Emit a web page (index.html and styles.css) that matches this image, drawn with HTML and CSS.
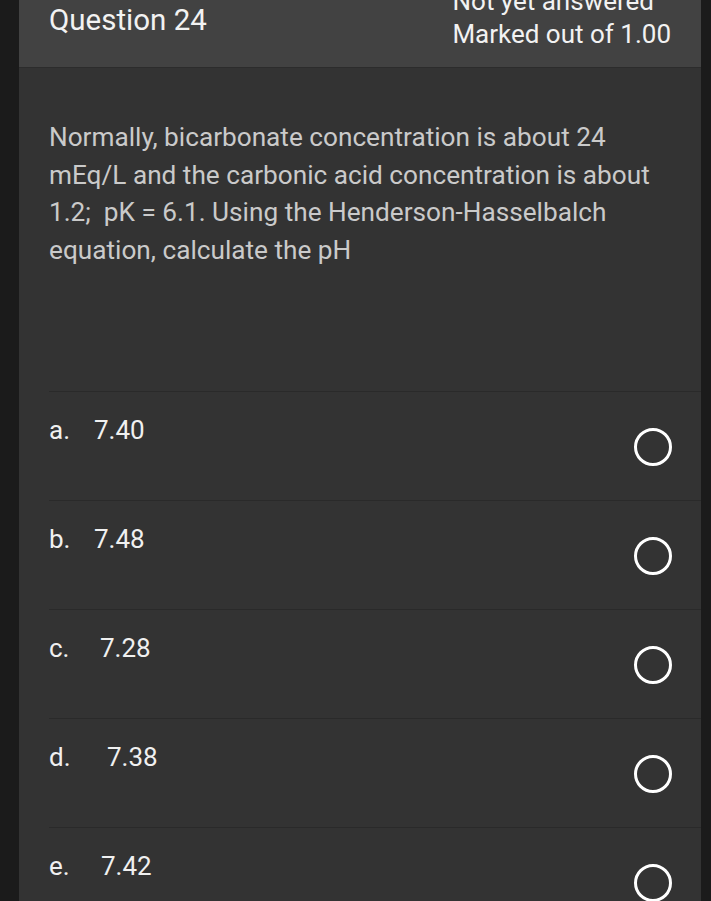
FILE: index.html
```html
<!DOCTYPE html>
<html>
<head>
<meta charset="utf-8">
<link rel="stylesheet" href="styles.css">
</head>
<body>
<div class="card">
  <div class="head">
    <div class="qno">Question 24</div>
    <div class="state">
      <div class="status">Not yet answered</div>
      <div class="grade">Marked out of 1.00</div>
    </div>
  </div>
  <div class="content">
    <p class="qtext">Normally, bicarbonate concentration is about 24 mEq/L and the carbonic acid concentration is about 1.2;&nbsp; pK = 6.1. Using the Henderson-Hasselbalch equation, calculate the pH</p>
    <div class="answers">
      <div class="opt"><span class="lbl"><span class="num n-a">a.</span>7.40</span><span class="radio"></span></div>
      <div class="opt"><span class="lbl"><span class="num n-b">b.</span>7.48</span><span class="radio"></span></div>
      <div class="opt"><span class="lbl"><span class="num n-c">c.</span>7.28</span><span class="radio"></span></div>
      <div class="opt"><span class="lbl"><span class="num n-d">d.</span>7.38</span><span class="radio"></span></div>
      <div class="opt"><span class="lbl"><span class="num n-e">e.</span>7.42</span><span class="radio"></span></div>
    </div>
  </div>
</div>
</body>
</html>
```
FILE: styles.css
```css
html, body {
  margin: 0;
  padding: 0;
  background: #1b1b1b;
  height: 100%;
  overflow: hidden;
}
body {
  font-family: Roboto, "Liberation Sans", sans-serif;
}
.card {
  margin-left: 19px;
  width: 682px;
  background: #333333;
  min-height: 901px;
}
.head {
  height: 68px;
  background: #424242;
  border-bottom: 1px solid #2c2c2c;
  box-sizing: border-box;
  display: flex;
  justify-content: space-between;
  padding: 0 30px 0 30px;
  overflow: hidden;
}
.qno {
  color: #f2f2f2;
  font-size: 29.5px;
  line-height: 32px;
  margin-top: 4px;
}
.state {
  color: #f2f2f2;
  font-size: 26px;
  line-height: 33px;
  text-align: right;
  margin-top: -15px;
}
.status {
  padding-right: 17px;
}
.content {
  padding: 51px 0 0 30px;
}
.qtext {
  margin: 0;
  color: #cacaca;
  font-size: 26.2px;
  line-height: 37.5px;
  padding-right: 40px;
  height: 272px;
}
.opt {
  border-top: 1px solid #2a2a2a;
  height: 108px;
  position: relative;
  color: #f0f0f0;
  font-size: 26px;
}
.lbl {
  display: block;
  padding-top: 22px;
  line-height: 32px;
}
.num { display: inline-block; }
.n-a { width: 45px; }
.n-b { width: 45px; }
.n-c { width: 51px; }
.n-d { width: 58px; }
.n-e { width: 52px; }
.radio {
  position: absolute;
  left: 585px;
  top: 36px;
  width: 32px;
  height: 32px;
  border: 3px solid #ffffff;
  border-radius: 50%;
}
```
